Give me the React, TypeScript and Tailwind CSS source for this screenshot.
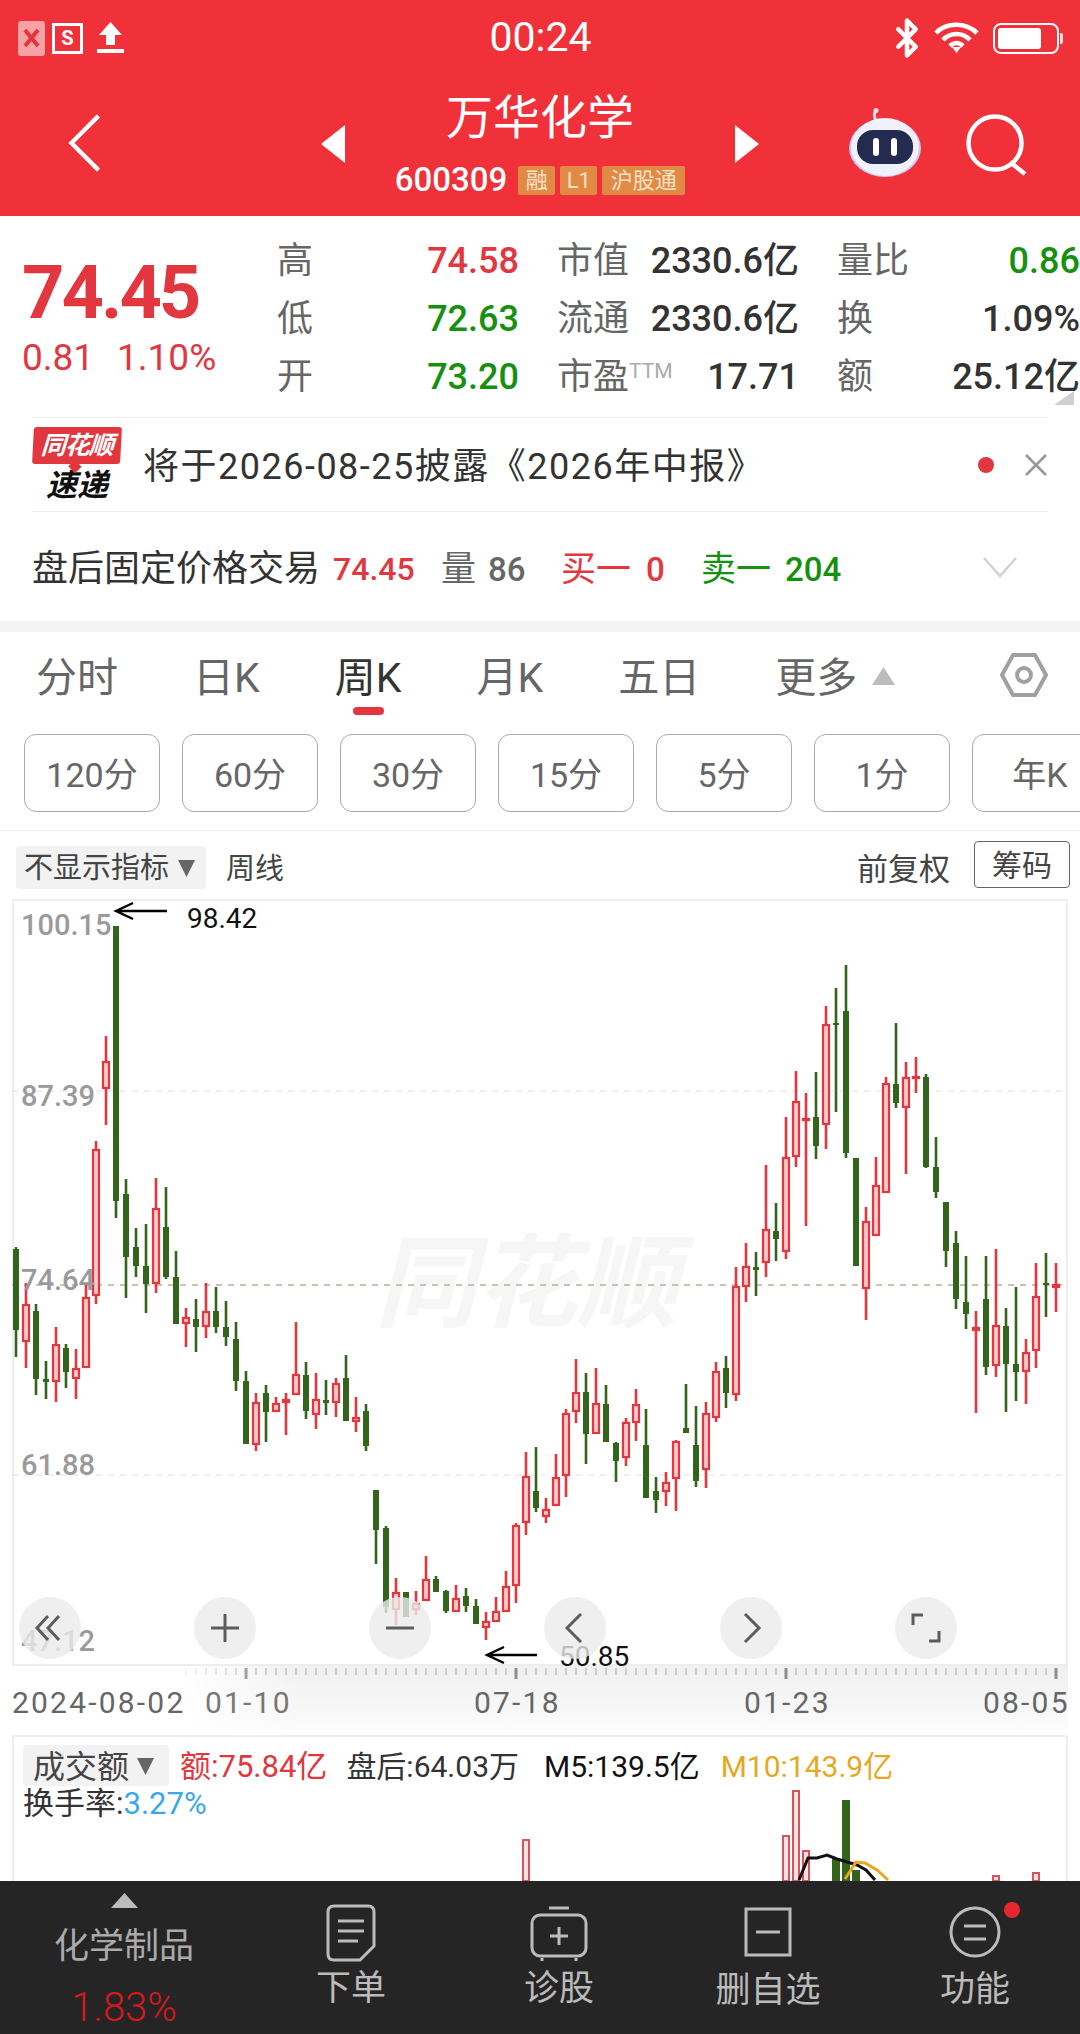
import React from 'react';
import { Bluetooth } from 'lucide-react';

// [red?, high, bodyTop, bodyBottom, low] in page pixels, x = 16 + 10 * index
const candles: number[][] = [
  [0,1247,1249,1330,1357],[1,1283,1304,1342,1368],[0,1304,1311,1379,1395],[0,1361,1379,1382,1399],[1,1327,1344,1382,1402],
  [0,1344,1348,1372,1388],[1,1349,1368,1379,1399],[1,1285,1297,1368,1368],[1,1141,1149,1296,1304],[1,1036,1061,1089,1125],
  [0,926,926,1201,1218],[0,1179,1194,1257,1298],[0,1228,1247,1266,1277],[0,1224,1266,1284,1313],[1,1178,1208,1284,1293],
  [0,1187,1227,1277,1279],[0,1251,1277,1324,1324],[1,1308,1317,1324,1347],[0,1299,1319,1327,1352],[1,1283,1311,1327,1338],
  [0,1287,1311,1327,1333],[0,1301,1327,1337,1346],[0,1322,1339,1381,1391],[0,1371,1381,1444,1444],[1,1393,1402,1445,1451],
  [0,1385,1393,1412,1442],[1,1397,1403,1412,1412],[1,1393,1399,1403,1435],[1,1322,1374,1395,1395],[0,1362,1375,1411,1419],
  [1,1373,1399,1415,1429],[0,1380,1400,1403,1415],[1,1378,1383,1403,1417],[0,1355,1378,1421,1421],[1,1397,1417,1422,1432],
  [0,1404,1411,1446,1451],[0,1490,1490,1530,1564],[0,1526,1528,1607,1613],[1,1578,1592,1610,1625],[0,1592,1592,1617,1617],
  [1,1591,1603,1610,1615],[1,1556,1579,1601,1601],[0,1576,1579,1592,1592],[0,1590,1591,1611,1613],[1,1585,1598,1612,1612],
  [0,1588,1596,1606,1612],[0,1599,1606,1624,1624],[1,1612,1621,1628,1640],[1,1597,1611,1622,1622],[1,1571,1586,1612,1612],
  [1,1523,1525,1586,1603],[1,1452,1476,1523,1535],[0,1447,1491,1508,1512],[1,1498,1509,1517,1523],[1,1454,1477,1506,1506],
  [1,1409,1413,1476,1497],[1,1359,1392,1412,1423],[0,1373,1392,1434,1464],[1,1368,1403,1434,1434],[0,1385,1404,1442,1442],
  [0,1442,1443,1461,1482],[1,1418,1422,1458,1466],[1,1389,1404,1423,1441],[0,1409,1445,1498,1498],[0,1477,1491,1500,1513],
  [1,1472,1482,1492,1506],[1,1440,1441,1479,1511],[0,1384,1428,1433,1433],[0,1406,1445,1481,1487],[1,1402,1413,1470,1488],
  [1,1362,1371,1418,1422],[0,1356,1368,1393,1408],[1,1267,1286,1395,1401],[1,1243,1266,1287,1302],[0,1252,1267,1270,1296],
  [1,1165,1229,1263,1277],[0,1203,1231,1239,1261],[1,1117,1157,1252,1259],[1,1071,1101,1157,1167],[1,1093,1118,1121,1226],
  [0,1072,1117,1146,1159],[1,1006,1024,1125,1149],[0,988,1023,1025,1112],[0,965,1011,1153,1158],[0,1158,1158,1266,1266],
  [1,1207,1221,1289,1320],[1,1157,1185,1236,1236],[1,1077,1083,1193,1193],[0,1023,1084,1103,1108],[1,1062,1077,1108,1174],
  [1,1057,1076,1078,1093],[0,1074,1077,1167,1168],[0,1137,1167,1192,1198],[0,1202,1202,1251,1267],[0,1231,1243,1299,1309],
  [0,1256,1302,1314,1329],[1,1311,1327,1331,1413],[0,1256,1299,1367,1375],[1,1249,1325,1366,1377],[0,1308,1326,1364,1412],
  [0,1287,1364,1372,1401],[1,1339,1352,1372,1404],[1,1263,1296,1351,1368],[0,1253,1283,1285,1317],[1,1263,1284,1288,1312],
];

const volumeBars = [
  { x: 526, top: 1841, red: true }, { x: 786, top: 1837, red: true }, { x: 796, top: 1792, red: true },
  { x: 806, top: 1852, red: true }, { x: 836, top: 1860, red: false }, { x: 846, top: 1802, red: false },
  { x: 856, top: 1872, red: false }, { x: 996, top: 1877, red: true }, { x: 1036, top: 1874, red: true },
];

const RED = '#e2373f';
const GREEN = '#33641b';

function CandleChart() {
  return (
    <svg className="absolute inset-0" width="1056" height="767" viewBox="12 899 1056 767">
      <line x1="12" x2="1068" y1="1091" y2="1091" stroke="#eaeaea" strokeWidth="1.5" strokeDasharray="6 6" />
      <line x1="12" x2="1068" y1="1475" y2="1475" stroke="#eaeaea" strokeWidth="1.5" strokeDasharray="6 6" />
      <line x1="12" x2="1068" y1="1285" y2="1285" stroke="#c0ad94" strokeWidth="1.5" strokeDasharray="6 6" />
      {candles.map((c, i) => {
        const x = 16 + i * 10;
        const color = c[0] ? RED : GREEN;
        return (
          <g key={i}>
            <line x1={x} x2={x} y1={c[1]} y2={c[2]} stroke={color} strokeWidth="2.6" />
            <line x1={x} x2={x} y1={c[3]} y2={c[4]} stroke={color} strokeWidth="2.6" />
            {c[0] ? (
              <rect x={x - 3} y={c[2] + 1} width="6" height={Math.max(c[3] - c[2] - 2, 1)} fill="#f8c9cb" stroke={RED} strokeWidth="2.2" />
            ) : (
              <rect x={x - 3} y={c[2]} width="6" height={Math.max(c[3] - c[2], 2)} fill={GREEN} />
            )}
          </g>
        );
      })}
      <g stroke="#000" strokeWidth="2.4" fill="none">
        <path d="M116 911H167M133 903L116 911L133 919" />
        <path d="M487 1655H537M504 1647L487 1655L504 1663" />
      </g>
    </svg>
  );
}

function RoundButton({ cx, children }: { cx: string; children: React.ReactNode }) {
  return (
    <div className={`absolute top-[698px] flex h-[62px] w-[62px] items-center justify-center rounded-full bg-[#ebebeb]/80 ${cx}`}>
      <svg width="34" height="34" viewBox="0 0 34 34" fill="none" stroke="#5c5c5c" strokeWidth="3">
        {children}
      </svg>
    </div>
  );
}

function Ruler() {
  const ticks = [];
  for (let x = 186; x < 1066; x += 10) {
    const major = (x - 246) % 270 === 0;
    ticks.push(
      <line key={x} x1={x} x2={x} y1="2" y2={major ? 13 : 9} stroke={major ? '#8e8e8e' : '#b5b5b5'} strokeWidth={major ? 3 : 1.2} />
    );
  }
  return (
    <svg className="absolute left-0 top-0 [mask-image:linear-gradient(to_right,transparent_170px,black_260px)]" width="1080" height="16">
      {ticks}
    </svg>
  );
}

function QuoteCell({ label, value, color, small }: { label: string; value: string; color: string; small?: string }) {
  return (
    <div className="flex items-center justify-between overflow-visible whitespace-nowrap">
      <span className="flex items-start text-[36px] leading-none text-[#666]">
        {label}
        {small && <span className="mt-[2px] text-[21px] leading-none text-[#aaa]">{small}</span>}
      </span>
      <span className={`text-[36px] font-medium leading-none ${color}`}>{value}</span>
    </div>
  );
}

export default function App() {
  return (
    <div className="relative h-[2034px] w-[1080px] overflow-hidden bg-white font-[Roboto,'Noto_Sans_CJK_SC',sans-serif]">
      {/* header */}
      <div className="h-[216px] bg-[#f0313a] text-white">
        <div className="grid h-[76px] grid-cols-[1fr_auto_1fr] items-center pl-[18px] pr-[17px]">
          <div className="flex items-center">
            <div className="flex h-[35px] w-[27px] items-center justify-center rounded-[3px] bg-[#f8a2a6]">
              <svg width="17" height="20" viewBox="0 0 17 20" stroke="#e4343c" strokeWidth="4"><path d="M2 2L15 18M15 2L2 18" /></svg>
            </div>
            <div className="ml-[7px] flex h-[31px] w-[31px] items-center justify-center border-[3px] border-white text-[20px] font-bold leading-none">S</div>
            <svg className="ml-[14px]" width="27" height="32" viewBox="0 0 27 32" fill="#fff">
              <path d="M13.5 0L25 13H18V23H9V13H2Z" />
              <rect y="27" width="27" height="4" />
            </svg>
          </div>
          <div className="-mt-[2px] text-[41px] leading-none">00:24</div>
          <div className="flex items-center justify-end">
            <Bluetooth size={42} strokeWidth={2.6} color="#fff" />
            <svg className="ml-[6px]" width="47" height="34" viewBox="0 0 47 34" fill="none" stroke="#fff" strokeWidth="4.6">
              <path d="M2 12C12 1 32 1 43 12" />
              <path d="M9 19C16 11 29 11 36 19" />
              <path d="M16 25C20 21 25 21 29 25" />
              <path d="M22.5 32L18 26H27Z" fill="#fff" stroke="none" />
            </svg>
            <div className="ml-[12px] flex h-[31px] w-[66px] items-center rounded-[8px] border-2 border-white p-[3px]">
              <div className="h-full w-[43px] rounded-[3px] bg-white" />
            </div>
            <div className="ml-[1px] h-[11px] w-[3px] rounded-r-[2px] bg-white/80" />
          </div>
        </div>
        <div className="grid h-[140px] grid-cols-[1fr_auto_1fr] items-start">
          <div className="pl-[66px] pt-[37px]">
            <svg width="36" height="60" viewBox="0 0 36 62" fill="none" stroke="#fff" strokeWidth="4.5"><path d="M33 3L5 31L33 59" /></svg>
          </div>
          <div className="flex items-center">
            <svg width="24" height="38" viewBox="0 0 24 38" fill="#fff" className="mt-[14px]"><path d="M24 0V38L0 19Z" /></svg>
            <div className="flex w-[390px] flex-col items-center">
              <div className="mt-[17px] text-[47px] leading-[50px]">万华化学</div>
              <div className="mt-[20px] flex items-center">
                <span className="text-[33px] font-medium leading-[34px]">600309</span>
                <div className="ml-[11px] flex gap-[5px] text-[22px] leading-[29px] text-[#fbe3c8]">
                  <span className="w-[37px] rounded-[2px] bg-[#e08a45] text-center">融</span>
                  <span className="w-[37px] rounded-[2px] bg-[#e08a45] text-center">L1</span>
                  <span className="w-[83px] rounded-[2px] bg-[#e08a45] text-center">沪股通</span>
                </div>
              </div>
            </div>
            <svg width="24" height="38" viewBox="0 0 24 38" fill="#fff" className="mt-[14px]"><path d="M0 0V38L24 19Z" /></svg>
          </div>
          <div className="flex items-start justify-end pr-[52px] pt-[32px]">
            <svg width="74" height="70" viewBox="0 0 74 70" fill="none">
              <path d="M29 14C25 9 26 4 29 2" stroke="#f4ddea" strokeWidth="3" />
              <circle cx="28" cy="2.5" r="2.5" fill="#f4ddea" />
              <ellipse cx="37" cy="40" rx="36" ry="29" fill="#c9c6f3" />
              <ellipse cx="37" cy="39" rx="34" ry="29" fill="#f1f1fd" />
              <rect x="9" y="22" width="56" height="34" rx="16" fill="#232b50" />
              <rect x="25" y="30" width="6" height="18" rx="3" fill="#fff" />
              <rect x="43" y="30" width="6" height="18" rx="3" fill="#fff" />
            </svg>
            <svg className="ml-[44px] mt-[6px]" width="62" height="62" viewBox="0 0 62 62" fill="none" stroke="#fff" strokeWidth="4.5">
              <circle cx="29" cy="29" r="26.5" />
              <path d="M44 48L59 60" />
            </svg>
          </div>
        </div>
      </div>

      {/* quote */}
      <div className="relative flex h-[201px]">
        <div className="w-[278px] pl-[22px]">
          <div className="mt-[42px] text-[74px] font-bold leading-[70px] tracking-[-3px] text-[#e2373f]">74.45</div>
          <div className="mt-[12px] flex text-[37px] leading-[36px] text-[#e2373f]">
            <span className="w-[95px]">0.81</span>
            <span>1.10%</span>
          </div>
        </div>
        <div className="grid grid-cols-[242px_242px_243px] grid-rows-[58px_58px_58px] gap-x-[38px] pt-[16px]">
          <QuoteCell label="高" value="74.58" color="text-[#e2373f]" />
          <QuoteCell label="市值" value="2330.6亿" color="text-[#333]" />
          <QuoteCell label="量比" value="0.86" color="text-[#16900f]" />
          <QuoteCell label="低" value="72.63" color="text-[#16900f]" />
          <QuoteCell label="流通" value="2330.6亿" color="text-[#333]" />
          <QuoteCell label="换" value="1.09%" color="text-[#333]" />
          <QuoteCell label="开" value="73.20" color="text-[#16900f]" />
          <QuoteCell label="市盈" small="TTM" value="17.71" color="text-[#333]" />
          <QuoteCell label="额" value="25.12亿" color="text-[#333]" />
        </div>
        <svg className="absolute bottom-[12px] right-[6px]" width="20" height="14" viewBox="0 0 20 14" fill="#cfcfcf"><path d="M20 0V14H0Z" /></svg>
      </div>

      {/* notice */}
      <div className="mx-[32px] flex h-[95px] items-center border-y border-[#eeeeee]">
        <div className="ml-[1px] flex w-[88px] flex-col items-center italic">
          <div className="relative h-[37px] w-[88px] -skew-x-3 rounded-[3px] bg-[#e2373f] text-center text-[25px] font-bold leading-[37px] tracking-[-1px] text-white">
            同花顺
            <div className="absolute left-[38px] top-[35px] h-[9px] w-[10px] rotate-45 bg-[#e2373f]" />
          </div>
          <div className="mt-[6px] text-[31px] font-bold leading-[32px] text-[#111]">速递</div>
        </div>
        <div className="ml-[22px] mt-[4px] whitespace-nowrap text-[36px] leading-none tracking-[1.5px] text-[#333]">将于2026-08-25披露《2026年中报》</div>
        <div className="ml-auto h-[16px] w-[16px] rounded-full bg-[#e2373f]" />
        <svg className="ml-[30px]" width="24" height="24" viewBox="0 0 24 24" stroke="#999" strokeWidth="2.6"><path d="M2 2L22 22M22 2L2 22" /></svg>
      </div>

      {/* after-hours */}
      <div className="flex h-[109px] items-center pl-[32px] pt-[5px] text-[35px] leading-none">
        <span className="w-[301px] whitespace-nowrap text-[36px] text-[#333]">盘后固定价格交易</span>
        <span className="w-[108px] text-[32px] font-medium text-[#e2373f]">74.45</span>
        <span className="w-[47px] text-[#666]">量</span>
        <span className="w-[73px] text-[33px] font-medium text-[#666]">86</span>
        <span className="w-[85px] whitespace-nowrap text-[#e2373f]">买一</span>
        <span className="w-[55px] text-[33px] font-medium text-[#e2373f]">0</span>
        <span className="w-[84px] whitespace-nowrap text-[#16900f]">卖一</span>
        <span className="text-[33px] font-medium text-[#16900f]">204</span>
        <svg className="-mt-[4px] ml-auto mr-[62px]" width="36" height="22" viewBox="0 0 36 22" fill="none" stroke="#d2d2d2" strokeWidth="2.6"><path d="M2 2L18 20L34 2" /></svg>
      </div>
      <div className="h-[11px] bg-[#f4f4f4]" />

      {/* period tabs */}
      <div className="flex h-[86px] items-center gap-[75px] pl-[36px] pt-[6px] text-[41px] leading-none text-[#666]">
        <span>分时</span>
        <span>日K</span>
        <span className="relative text-[#333]">
          周K
          <span className="absolute left-[18px] top-[49px] h-[8px] w-[31px] rounded-full bg-[#e2373f]" />
        </span>
        <span>月K</span>
        <span>五日</span>
        <span className="flex items-center">
          更多
          <svg className="-mt-[4px] ml-[15px]" width="23" height="18" viewBox="0 0 23 18" fill="#bdbdbd"><path d="M11.5 0L23 18H0Z" /></svg>
        </span>
        <svg className="-mt-[6px] ml-auto mr-[32px]" width="48" height="46" viewBox="0 0 48 46" fill="none" stroke="#a0a0a0" strokeWidth="4">
          <path d="M13 3H35L46 23L35 43H13L2 23Z" />
          <circle cx="24" cy="23" r="7" />
        </svg>
      </div>
      <div className="mt-[16px] flex gap-[22px] overflow-hidden pl-[24px] text-[34px] leading-none text-[#666]">
        {['120分', '60分', '30分', '15分', '5分', '1分', '年K'].map(label => (
          <div key={label} className="flex h-[78px] w-[136px] shrink-0 items-center justify-center rounded-[12px] border border-[#aaaaaa] pt-[3px]">
            {label}
          </div>
        ))}
      </div>
      <div className="mt-[18px] h-px bg-[#eeeeee]" />

      {/* indicator bar */}
      <div className="flex h-[68px] items-center pl-[16px] pr-[10px] pt-[4px] text-[#444]">
        <div className="flex h-[43px] w-[190px] items-center rounded-[4px] bg-[#f2f2f2] pl-[8px] pt-[2px] text-[29px] leading-none">
          不显示指标
          <svg className="ml-[9px]" width="17" height="17" viewBox="0 0 17 17" fill="#666"><path d="M0 0H17L8.5 17Z" /></svg>
        </div>
        <span className="ml-[20px] mt-[4px] text-[29px] leading-none">周线</span>
        <span className="ml-auto mt-[4px] text-[31px] leading-none">前复权</span>
        <div className="-mt-[6px] ml-[24px] flex h-[47px] w-[96px] items-center justify-center rounded-[4px] border border-[#666] pt-[3px] text-[30px] leading-none">筹码</div>
      </div>

      {/* candle chart */}
      <div className="relative ml-[12px] h-[767px] w-[1056px] shadow-[inset_0_0_0_2px_#eeeeee]">
        <div className="absolute left-[363px] top-[335px] text-[101px] font-bold italic leading-none text-[#f6f6f6]">同花顺</div>
        <CandleChart />
        <div className="text-[29px] font-medium leading-none text-[#9a9a9a]">
          <span className="absolute left-[9px] top-[12px]">100.15</span>
          <span className="absolute left-[9px] top-[183px]">87.39</span>
          <span className="absolute left-[9px] top-[367px]">74.64</span>
          <span className="absolute left-[9px] top-[552px]">61.88</span>
          <span className="absolute left-[9px] top-[728px]">47.12</span>
        </div>
        <span className="absolute left-[175px] top-[6px] text-[28px] leading-none text-[#111]">98.42</span>
        <span className="absolute left-[547px] top-[744px] text-[28px] leading-none text-[#111]">50.85</span>
        <RoundButton cx="left-[7px]">
          <path d="M15 5L4 17L15 29M26 5L15 17L26 29" />
        </RoundButton>
        <RoundButton cx="left-[182px]">
          <path d="M3 17H31M17 3V31" />
        </RoundButton>
        <RoundButton cx="left-[357px]">
          <path d="M3 17H31" />
        </RoundButton>
        <RoundButton cx="left-[532px]">
          <path d="M23 3L9 17L23 31" />
        </RoundButton>
        <RoundButton cx="left-[708px]">
          <path d="M11 3L25 17L11 31" />
        </RoundButton>
        <RoundButton cx="left-[883px]">
          <path d="M4 14V4H14M30 20V30H20" />
        </RoundButton>
      </div>

      {/* date axis */}
      <div className="relative h-[69px]">
        <div className="absolute bottom-[6px] left-[180px] right-[12px] top-0 bg-gradient-to-b from-[#f0f0f0] to-[#fbfbfb] [mask-image:linear-gradient(to_right,transparent,black_120px)]" />
        <Ruler />
        <div className="relative flex pl-[12px] pt-[22px] text-[30px] leading-none tracking-[2.2px] text-[#666]">
          <span className="w-[193px]">2024-08-02</span>
          <span className="w-[269px] text-[#777]">01-10</span>
          <span className="w-[270px]">07-18</span>
          <span className="w-[239px]">01-23</span>
          <span>08-05</span>
        </div>
      </div>

      {/* volume panel */}
      <div className="relative ml-[12px] h-[300px] w-[1056px] shadow-[inset_0_0_0_2px_#eeeeee] pt-[10px]">
        <div className="flex items-center pl-[11px] text-[30px] leading-none">
          <div className="flex h-[41px] w-[146px] items-center rounded-[4px] bg-[#f2f2f2] pl-[10px] pt-[2px] text-[32px] text-[#444]">
            成交额
            <svg className="ml-[8px]" width="17" height="17" viewBox="0 0 17 17" fill="#666"><path d="M0 0H17L8.5 17Z" /></svg>
          </div>
          <span className="ml-[11px] mt-[2px] text-[31px] text-[#e2373f]">额:75.84亿</span>
          <span className="ml-[19px] mt-[2px] text-[#333]">盘后:64.03万</span>
          <span className="ml-[25px] mt-[2px] text-[#111]">M5:139.5亿</span>
          <span className="ml-[21px] mt-[2px] text-[#e5a823]">M10:143.9亿</span>
        </div>
        <div className="mt-[1px] pl-[11px] text-[31px] leading-[34px] text-[#333]">
          换手率:<span className="text-[#3aa8e8]">3.27%</span>
        </div>
        <svg className="absolute inset-0" width="1056" height="300" viewBox="12 1736 1056 300" fill="none">
          {volumeBars.map(b => (
            <rect
              key={b.x}
              x={b.x - 3}
              y={b.top}
              width="6"
              height={1882 - b.top}
              fill={b.red ? '#fbe3e4' : GREEN}
              stroke={b.red ? '#d9535a' : GREEN}
              strokeWidth="2"
            />
          ))}
          <path d="M799 1881L808 1859L817 1859L827 1856L837 1860L857 1866L866 1871L875 1881" stroke="#111" strokeWidth="3" />
          <path d="M845 1880L856 1863L865 1864L877 1871L888 1881" stroke="#e5a823" strokeWidth="3" />
        </svg>
      </div>

      {/* bottom bar */}
      <div className="absolute bottom-0 left-0 flex h-[153px] w-full bg-[#252525] text-[#bbb]">
        <div className="flex w-[248px] flex-col items-center text-[#aaa]">
          <svg className="mt-[12px]" width="27" height="15" viewBox="0 0 27 15" fill="#bbb"><path d="M13.5 0L27 15H0Z" /></svg>
          <div className="mt-[21px] text-[35px] leading-none">化学制品</div>
          <div className="mt-[24px] text-[40px] font-light leading-none text-[#d8171e]">1.83%</div>
        </div>
        <div className="absolute left-[271px] flex w-[160px] flex-col items-center">
          <svg className="mt-[23px]" width="50" height="58" viewBox="0 0 50 58" fill="none" stroke="#bbb" strokeWidth="3">
            <path d="M8 2H42Q48 2 48 8V42L34 56H8Q2 56 2 50V8Q2 2 8 2Z" />
            <path d="M12 17H38M12 27H38M12 37H32" />
          </svg>
          <div className="mt-[9px] text-[35px] leading-none">下单</div>
        </div>
        <div className="absolute left-[479px] flex w-[160px] flex-col items-center">
          <svg className="mt-[25px]" width="58" height="56" viewBox="0 0 58 56" fill="none" stroke="#bbb" strokeWidth="3">
            <path d="M19 2H39" />
            <rect x="2" y="9" width="54" height="41" rx="8" />
            <path d="M29 21V39M20 30H38M12 52V55M46 52V55" />
          </svg>
          <div className="mt-[9px] text-[35px] leading-none">诊股</div>
        </div>
        <div className="absolute left-[688px] flex w-[160px] flex-col items-center">
          <svg className="mt-[26px]" width="48" height="50" viewBox="0 0 48 50" fill="none" stroke="#bbb" strokeWidth="3">
            <rect x="2" y="2" width="44" height="46" />
            <path d="M12 25H36" />
          </svg>
          <div className="mt-[16px] text-[35px] leading-none">删自选</div>
        </div>
        <div className="absolute left-[895px] flex w-[160px] flex-col items-center">
          <svg className="mt-[25px]" width="52" height="52" viewBox="0 0 52 52" fill="none" stroke="#bbb" strokeWidth="3">
            <circle cx="26" cy="26" r="24" />
            <path d="M15 20H37M15 33H37" />
          </svg>
          <div className="mt-[14px] text-[35px] leading-none">功能</div>
          <div className="absolute left-[109px] top-[21px] h-[16px] w-[16px] rounded-full bg-[#e8262e]" />
        </div>
      </div>
    </div>
  );
}
